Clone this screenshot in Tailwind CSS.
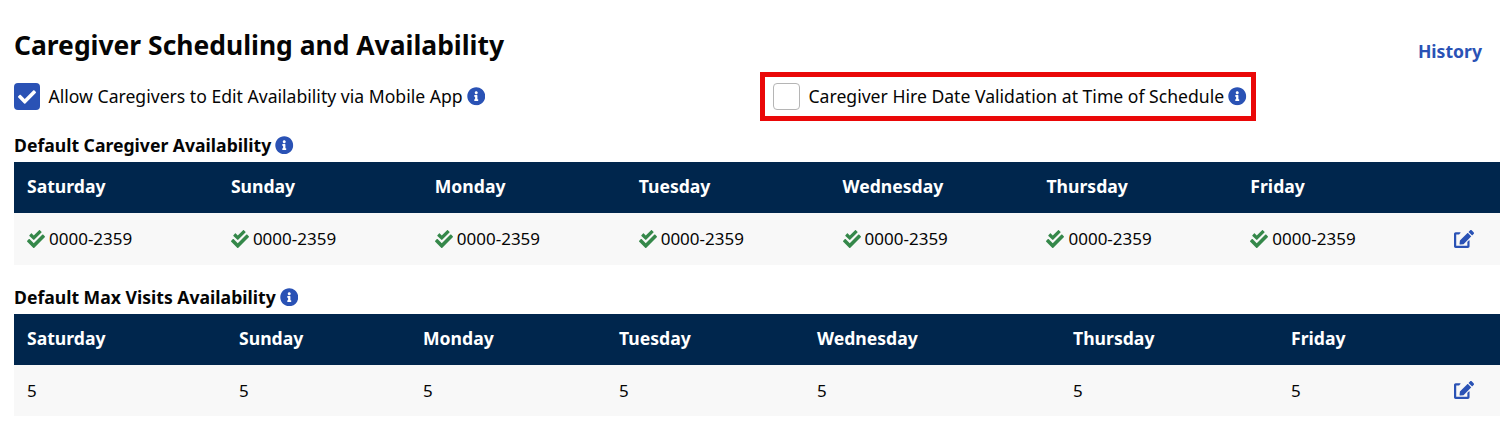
<!DOCTYPE html>
<html lang="en">
<head>
  <meta charset="UTF-8">
  <title>Caregiver Scheduling and Availability</title>
  <script src="https://cdn.jsdelivr.net/npm/@tailwindcss/browser@4"></script>
</head>
<body class="bg-white font-['Noto_Sans',sans-serif] text-[#050505] text-[17.6px] overflow-hidden">
  <svg class="hidden">
    <symbol id="info" viewBox="0 0 512 512"><path fill="currentColor" d="M256 8C119.043 8 8 119.083 8 256c0 136.997 111.043 248 248 248s248-111.003 248-248C504 119.083 392.957 8 256 8zm0 110c23.196 0 42 18.804 42 42s-18.804 42-42 42-42-18.804-42-42 18.804-42 42-42zm56 254c0 6.627-5.373 12-12 12h-88c-6.627 0-12-5.373-12-12v-24c0-6.627 5.373-12 12-12h12v-64h-12c-6.627 0-12-5.373-12-12v-24c0-6.627 5.373-12 12-12h64c6.627 0 12 5.373 12 12v100h12c6.627 0 12 5.373 12 12v24z"/></symbol>
    <symbol id="dbl" viewBox="0 0 512 512"><path fill="currentColor" d="M505 174.8l-39.6-39.6c-9.4-9.4-24.6-9.4-33.9 0L192 374.7 80.6 263.2c-9.4-9.4-24.6-9.4-33.9 0L7 302.9c-9.4 9.4-9.4 24.6 0 34L175 505c9.4 9.4 24.6 9.4 33.9 0l296-296.2c9.4-9.5 9.4-24.7.1-34zm-324.3 106c6.2 6.3 16.4 6.3 22.6 0l208-208.2c6.2-6.3 6.2-16.4 0-22.6L366.1 4.7c-6.2-6.3-16.4-6.3-22.6 0L192 156.2l-55.4-55.5c-6.2-6.3-16.4-6.3-22.6 0L68.7 146c-6.2 6.3-6.2 16.4 0 22.6l112 112.2z"/></symbol>
    <symbol id="edit" viewBox="0 0 576 512"><path fill="currentColor" d="M402.6 83.2l90.2 90.2c3.8 3.8 3.8 10 0 13.8L274.4 405.6l-92.8 10.3c-12.4 1.4-22.9-9.1-21.5-21.5l10.3-92.8L388.8 83.2c3.8-3.8 10-3.8 13.8 0zm162-22.9l-48.8-48.8c-15.2-15.2-39.9-15.2-55.2 0l-35.4 35.4c-3.8 3.8-3.8 10 0 13.8l90.2 90.2c3.8 3.8 10 3.8 13.8 0l35.4-35.4c15.2-15.3 15.2-40 0-55.2zM384 346.2V448H64V128h73.1c3.2 0 6.2-1.3 8.5-3.5l40-40c7.6-7.6 2.2-20.5-8.5-20.5H48C21.5 64 0 85.5 0 112v352c0 26.5 21.5 48 48 48h352c26.5 0 48-21.5 48-48V306.2c0-10.7-12.9-16-20.5-8.5l-40 40c-2.2 2.3-3.5 5.3-3.5 8.5z"/></symbol>
  </svg>

  <div class="pl-[14px] pr-3 pt-[28px]">
    <div class="flex justify-between items-start pr-[18px]">
      <h1 class="text-[26.45px] leading-[36px] font-bold -mt-[1px] mb-[1px]">Caregiver Scheduling and Availability</h1>
      <a class="mt-[10px] text-[#2a52b5] font-bold text-[17.6px] leading-[26px]">History</a>
    </div>

    <div class="flex items-start h-[50px] mt-[8px]">
      <label class="flex items-center w-[746px] h-[49px]">
        <span class="flex items-center justify-center w-[26px] h-[27px] rounded-[4px] bg-[#2a52b5] text-white mr-[8.5px]">
          <svg class="w-[18px] h-[18px]" viewBox="0 0 512 512"><path fill="currentColor" d="M173.898 439.404l-166.4-166.4c-9.997-9.997-9.997-26.206 0-36.204l36.203-36.204c9.997-9.998 26.207-9.998 36.204 0L192 312.69 432.095 72.596c9.997-9.997 26.207-9.997 36.204 0l36.203 36.204c9.997 9.997 9.997 26.206 0 36.204l-294.4 294.401c-9.998 9.997-26.207 9.997-36.204-.001z"/></svg>
        </span>
        Allow Caregivers to Edit Availability via Mobile App
        <svg class="w-[18.5px] h-[18.5px] ml-[4px] text-[#2a52b5]"><use href="#info"/></svg>
      </label>
      <label class="flex items-center w-[496px] h-[49px] border-[5px] border-[#ea0808] pl-[8px]">
        <span class="w-[27px] h-[27px] rounded-[4px] border border-[#b5b5b5] bg-white mr-[8.5px]"></span>
        Caregiver Hire Date Validation at Time of Schedule
        <svg class="w-[18.5px] h-[18.5px] ml-[4px] text-[#2a52b5]"><use href="#info"/></svg>
      </label>
    </div>

    <div class="flex items-center mt-[10px] h-[26px] font-bold">
      Default Caregiver Availability
      <svg class="w-[18.5px] h-[18.5px] ml-[4px] text-[#2a52b5]"><use href="#info"/></svg>
    </div>
    <div class="grid grid-cols-[203.9px_203.9px_203.9px_203.9px_203.9px_203.9px_186px_1fr] bg-[#00264d] text-white font-bold h-[51px] items-center pl-[13px] pb-[2px] mt-[4px]">
      <div>Saturday</div><div>Sunday</div><div>Monday</div><div>Tuesday</div><div>Wednesday</div><div>Thursday</div><div>Friday</div><div></div>
    </div>
    <div class="grid grid-cols-[203.9px_203.9px_203.9px_203.9px_203.9px_203.9px_203.6px_1fr] bg-[#f8f8f8] h-[52px] items-center pl-[13px] text-[17px]">
      <div class="flex items-center"><svg class="w-[18px] h-[18px] mr-[4px] -mt-px text-[#35884a]"><use href="#dbl"/></svg>0000-2359</div>
      <div class="flex items-center"><svg class="w-[18px] h-[18px] mr-[4px] -mt-px text-[#35884a]"><use href="#dbl"/></svg>0000-2359</div>
      <div class="flex items-center"><svg class="w-[18px] h-[18px] mr-[4px] -mt-px text-[#35884a]"><use href="#dbl"/></svg>0000-2359</div>
      <div class="flex items-center"><svg class="w-[18px] h-[18px] mr-[4px] -mt-px text-[#35884a]"><use href="#dbl"/></svg>0000-2359</div>
      <div class="flex items-center"><svg class="w-[18px] h-[18px] mr-[4px] -mt-px text-[#35884a]"><use href="#dbl"/></svg>0000-2359</div>
      <div class="flex items-center"><svg class="w-[18px] h-[18px] mr-[4px] -mt-px text-[#35884a]"><use href="#dbl"/></svg>0000-2359</div>
      <div class="flex items-center"><svg class="w-[18px] h-[18px] mr-[4px] -mt-px text-[#35884a]"><use href="#dbl"/></svg>0000-2359</div>
      <div><svg class="w-[20px] h-[18px] -mt-px text-[#2a52b5]"><use href="#edit"/></svg></div>
    </div>

    <div class="flex items-center mt-[19px] h-[26px] font-bold">
      Default Max Visits Availability
      <svg class="w-[18.5px] h-[18.5px] ml-[4px] text-[#2a52b5]"><use href="#info"/></svg>
    </div>
    <div class="grid grid-cols-[212px_184px_196px_198px_256px_218px_163px_1fr] bg-[#00264d] text-white font-bold h-[51px] items-center pl-[13px] pb-[2px] mt-[4px]">
      <div>Saturday</div><div>Sunday</div><div>Monday</div><div>Tuesday</div><div>Wednesday</div><div>Thursday</div><div>Friday</div><div></div>
    </div>
    <div class="grid grid-cols-[212px_184px_196px_198px_256px_218px_163px_1fr] bg-[#f8f8f8] h-[51px] items-center pl-[13px] text-[17px]">
      <div>5</div><div>5</div><div>5</div><div>5</div><div>5</div><div>5</div><div>5</div>
      <div class="justify-self-end mr-[26px]"><svg class="w-[20px] h-[18px] -mt-px text-[#2a52b5]"><use href="#edit"/></svg></div>
    </div>
  </div>
</body>
</html>
